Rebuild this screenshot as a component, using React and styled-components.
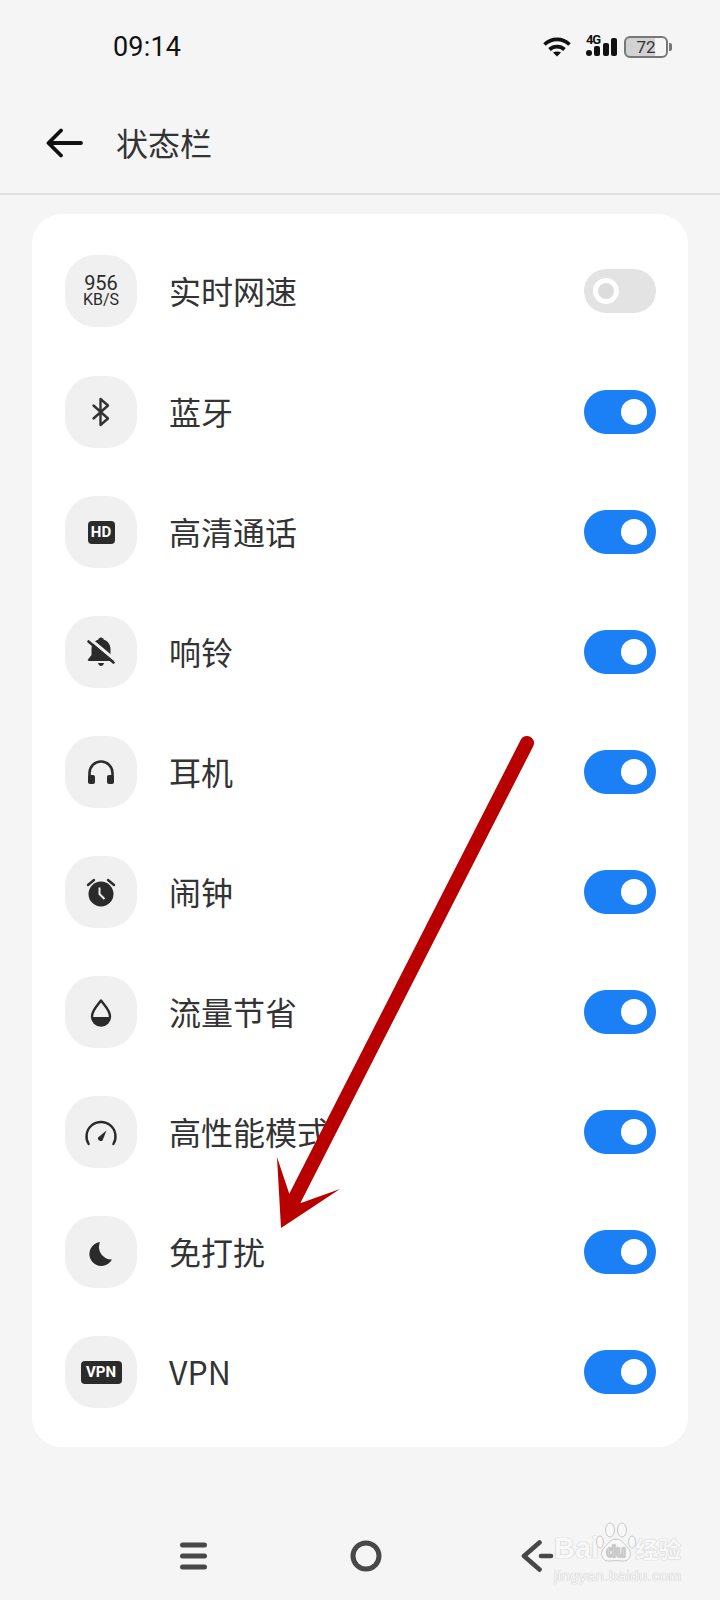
import React from "react";
import styled, { createGlobalStyle } from "styled-components";

const GlobalStyle = createGlobalStyle`
  html, body {
    margin: 0;
    padding: 0;
    background: #f5f5f5;
  }
  * {
    box-sizing: border-box;
  }
`;

const Page = styled.div`
  position: relative;
  width: 720px;
  height: 1600px;
  overflow: hidden;
  background: #f5f5f5;
  font-family: "Noto Sans CJK SC", Roboto, sans-serif;
  color: #333;
`;

const StatusBar = styled.div`
  height: 94px;
  display: flex;
  align-items: center;
  justify-content: space-between;
  padding: 0 48px 0 113px;
`;

const Time = styled.span`
  font-family: Roboto, sans-serif;
  font-size: 27px;
  letter-spacing: 0.2px;
  color: #111;
`;

const StatusIcons = styled.div`
  display: flex;
  align-items: center;
  margin-top: -1px;
`;

const WifiIcon = styled.svg`
  width: 28px;
  height: 20px;
`;

const SignalIcon = styled.svg`
  width: 32px;
  height: 22px;
  margin: -3px 0 0 15px;
  overflow: visible;
`;

const Battery = styled.div`
  display: flex;
  align-items: center;
  margin-left: 6px;
`;

const BatteryBody = styled.div`
  width: 44px;
  height: 22px;
  border: 2px solid #777;
  border-radius: 6px;
  display: flex;
  align-items: center;
  justify-content: center;
  font-family: Roboto, sans-serif;
  font-size: 17px;
  color: #333;
  background: linear-gradient(
    to right,
    #d2d2d2 ${(p) => p.$level}%,
    #f5f5f5 ${(p) => p.$level}%
  );
`;

const BatteryTip = styled.div`
  width: 3px;
  height: 8px;
  margin-left: 1px;
  background: #777;
  border-radius: 0 2px 2px 0;
`;

const Header = styled.header`
  height: 101px;
  display: flex;
  align-items: center;
  padding: 0 0 2px 46px;
  border-bottom: 2px solid #e0e0e0;
`;

const BackButton = styled.svg`
  width: 37px;
  height: 30px;
  margin-right: 33px;
`;

const Title = styled.h1`
  margin: -2px 0 0;
  font-size: 32px;
  font-weight: 400;
  color: #333;
`;

const Card = styled.section`
  margin: 19px 32px 0 32px;
  height: 1233px;
  padding: 41px 32px 37px 33px;
  background: #fff;
  border-radius: 30px;
  display: flex;
  flex-direction: column;
  gap: 48px;
`;

const Row = styled.div`
  height: 72px;
  display: flex;
  align-items: center;

  &:first-child {
    margin-bottom: 1px;
  }
`;

const IconBox = styled.div`
  width: 72px;
  height: 72px;
  flex: none;
  border-radius: 30px;
  background: #f0f0f0;
  display: flex;
  flex-direction: column;
  align-items: center;
  justify-content: center;
`;

const Icon = styled.svg`
  width: 40px;
  height: 40px;
`;

const Speed = styled.span`
  font-family: Roboto, sans-serif;
  font-size: ${(p) => p.$size}px;
  line-height: ${(p) => p.$line}px;
  color: #2b2b2b;
`;

const Tag = styled.span`
  width: ${(p) => p.$width}px;
  height: 23px;
  border-radius: 4px;
  background: #2b2b2b;
  color: #fff;
  font-family: Roboto, sans-serif;
  font-size: 15px;
  font-weight: 700;
  display: flex;
  align-items: center;
  justify-content: center;
`;

const Label = styled.span`
  flex: 1;
  margin: -3px 0 0 32px;
  font-size: 32px;
  line-height: 40px;
  color: #333;
`;

const Track = styled.div`
  width: 72px;
  height: 44px;
  border-radius: 22px;
  padding: 9px;
  display: flex;
  justify-content: ${(p) => (p.$on ? "flex-end" : "flex-start")};
  background: ${(p) => (p.$on ? "#1b7ff5" : "#e3e3e3")};
`;

const Knob = styled.div`
  width: 26px;
  height: 26px;
  border-radius: 50%;
  background: ${(p) => (p.$on ? "#fff" : "#dcdcdc")};
  border: ${(p) => (p.$on ? "none" : "5px solid #fff")};
`;

const NavBar = styled.nav`
  display: grid;
  grid-template-columns: repeat(3, 172px);
  padding: 93px 0 0 108px;
  justify-items: center;
`;

const NavIcon = styled.svg`
  width: 40px;
  height: 32px;
`;

const ArrowOverlay = styled.svg`
  position: absolute;
  left: 0;
  top: 0;
  width: 720px;
  height: 1600px;
  pointer-events: none;
`;

const Watermark = styled.div`
  position: absolute;
  left: 554px;
  top: 1522px;
  width: 130px;
  display: flex;
  flex-direction: column;
  color: #f8f8f8;
  text-shadow: 0 0 1px #c4c4c4, 0 0 1px #c4c4c4;
`;

const MarkLine = styled.div`
  display: flex;
  align-items: flex-end;
  height: 42px;
`;

const MarkLatin = styled.span`
  font-family: "Liberation Sans", sans-serif;
  font-weight: 700;
  font-size: 29px;
  line-height: 32px;
`;

const MarkPaw = styled.svg`
  width: 40px;
  height: 42px;
  margin: 0 -1px 0 -3px;
  flex: none;
`;

const MarkCjk = styled.span`
  font-size: 23px;
  line-height: 32px;
  font-weight: 700;
`;

const MarkUrl = styled.span`
  font-family: "Liberation Sans", sans-serif;
  font-size: 15px;
  line-height: 16px;
  letter-spacing: 0.4px;
  margin-top: 4px;
`;

const dark = "#2b2b2b";

const BluetoothIcon = () => (
  <Icon viewBox="0 0 40 40" fill="none" stroke="#333" strokeWidth="2.4" strokeLinejoin="round" strokeLinecap="round">
    <path d="M12.5 13.5L27 26.5L19.5 33V7L27 13.5L12.5 26.5" />
  </Icon>
);

const BellOffIcon = () => (
  <Icon viewBox="0 0 40 40">
    <path
      fill={dark}
      d="M20 5.5c1.5 0 2.6 1 2.8 2.2C27 9 29.5 12.5 29.5 17v6l3.5 4.5c.4.6 0 1.5-.8 1.5H7.8c-.8 0-1.2-.9-.8-1.5L10.500 23v-6c0-4.500 2.500-8 6.700-9.300C17.400 6.500 18.500 5.500 20 5.500z"
    />
    <path fill={dark} d="M17 31h6c-.4 1.800-1.600 3-3 3s-2.600-1.200-3-3z" />
    <path stroke="#f0f0f0" strokeWidth="3" d="M9 7l25 21" />
    <path stroke={dark} strokeWidth="2.600" strokeLinecap="round" d="M7.500 9.500l25 21" />
  </Icon>
);

const HeadphonesIcon = () => (
  <Icon viewBox="0 0 40 40">
    <path d="M8.500 29V21a11.500 11.500 0 0 1 23 0v8" fill="none" stroke={dark} strokeWidth="2.600" />
    <rect x="7" y="23" width="7" height="9" rx="2" fill={dark} />
    <rect x="26" y="23" width="7" height="9" rx="2" fill={dark} />
  </Icon>
);

const AlarmIcon = () => (
  <Icon viewBox="0 0 40 40">
    <circle cx="20" cy="22" r="12.500" fill={dark} />
    <path d="M18.500 15.500V22l5 5" fill="none" stroke="#f0f0f0" strokeWidth="2" />
    <path d="M7 13l6-5M33 13l-6-5" stroke={dark} strokeWidth="2.400" strokeLinecap="round" />
  </Icon>
);

const DropIcon = () => (
  <Icon viewBox="0 0 40 40">
    <path
      d="M20 8.500c3.500 5 9 9.500 9 16a9 9 0 0 1-18 0c0-6.500 5.500-11 9-16z"
      fill="none"
      stroke={dark}
      strokeWidth="2.400"
      strokeLinejoin="round"
    />
    <path d="M11 25h18a9 9 0 0 1-18 0z" fill={dark} />
  </Icon>
);

const GaugeIcon = () => (
  <Icon viewBox="0 0 40 40">
    <path d="M7.600 32a14.500 14.500 0 1 1 24.800 0" fill="none" stroke={dark} strokeWidth="2.400" strokeLinecap="round" />
    <path d="M17 25.500L25.500 18.500L21.500 28.500C20 30 16 28 17 25.500z" fill={dark} />
  </Icon>
);

const MoonIcon = () => (
  <Icon viewBox="0 0 40 40">
    <path d="M19 10a12 12 0 1 0 12 17.500A12.500 12.500 0 0 1 19 10z" fill={dark} />
  </Icon>
);

const rows = [
  {
    label: "实时网速",
    on: false,
    icon: (
      <>
        <Speed $size={20} $line={17}>956</Speed>
        <Speed $size={16} $line={15}>KB/S</Speed>
      </>
    ),
  },
  { label: "蓝牙", on: true, icon: <BluetoothIcon /> },
  { label: "高清通话", on: true, icon: <Tag $width={27}>HD</Tag> },
  { label: "响铃", on: true, icon: <BellOffIcon /> },
  { label: "耳机", on: true, icon: <HeadphonesIcon /> },
  { label: "闹钟", on: true, icon: <AlarmIcon /> },
  { label: "流量节省", on: true, icon: <DropIcon /> },
  { label: "高性能模式", on: true, icon: <GaugeIcon /> },
  { label: "免打扰", on: true, icon: <MoonIcon /> },
  { label: "VPN", on: true, icon: <Tag $width={41}>VPN</Tag> },
];

export default function App() {
  return (
    <Page>
      <GlobalStyle />
      <StatusBar>
        <Time>09:14</Time>
        <StatusIcons>
          <WifiIcon viewBox="0 0 28 20" fill="none" stroke="#111" strokeWidth="3.800">
            <path d="M1.500 7.500a18 18 0 0 1 25 0" />
            <path d="M6.500 12.500a11 11 0 0 1 15 0" />
            <path d="M10 15.500l4 4 4-4c-2.500-1.500-5.500-1.500-8 0z" fill="#111" stroke="none" />
          </WifiIcon>
          <SignalIcon viewBox="0 0 32 22" fill="#111">
            <text x="0" y="10" fontFamily="Roboto, sans-serif" fontWeight="700" fontSize="13" textLength="15">4G</text>
            <circle cx="3" cy="19" r="3" />
            <rect x="8" y="12" width="6" height="10" rx="2" />
            <rect x="17" y="9" width="6" height="13" rx="2" />
            <rect x="25" y="4" width="6" height="18" rx="2" />
          </SignalIcon>
          <Battery>
            <BatteryBody $level={72}>72</BatteryBody>
            <BatteryTip />
          </Battery>
        </StatusIcons>
      </StatusBar>

      <Header>
        <BackButton viewBox="0 0 37 30" fill="none" stroke="#111" strokeWidth="3.800" strokeLinecap="round" strokeLinejoin="round">
          <path d="M35 15H3M15 2.500L2.500 15L15 27.500" />
        </BackButton>
        <Title>状态栏</Title>
      </Header>

      <Card>
        {rows.map((row) => (
          <Row key={row.label}>
            <IconBox>{row.icon}</IconBox>
            <Label>{row.label}</Label>
            <Track $on={row.on}>
              <Knob $on={row.on} />
            </Track>
          </Row>
        ))}
      </Card>

      <NavBar>
        <NavIcon viewBox="0 0 40 32" fill="none" stroke="#484848" strokeWidth="5" strokeLinecap="round">
          <path d="M8.500 5h22M8.500 16h22M8.500 27h22" />
        </NavIcon>
        <NavIcon viewBox="0 0 40 32" fill="none" stroke="#484848" strokeWidth="5">
          <circle cx="20" cy="16" r="13" />
        </NavIcon>
        <NavIcon viewBox="0 0 40 32" fill="none" stroke="#484848" strokeWidth="4.600" strokeLinecap="round" strokeLinejoin="round">
          <path d="M21.500 2.500L6 16L21.500 29.500" />
          <path d="M23 16H33" />
        </NavIcon>
      </NavBar>

      <ArrowOverlay viewBox="0 0 720 1600">
        <line x1="527" y1="743" x2="294" y2="1200" stroke="#b90000" strokeWidth="14" strokeLinecap="round" />
        <polygon points="281,1228 277,1157 290,1196 301,1203 340,1189" fill="#b90000" />
      </ArrowOverlay>

      <Watermark>
        <MarkLine>
          <MarkLatin>Bai</MarkLatin>
          <MarkPaw viewBox="0 0 40 42" fill="#f8f8f8" stroke="#c8c8c8" strokeWidth="1">
            <ellipse cx="4" cy="20" rx="3.500" ry="6" />
            <ellipse cx="14" cy="8" rx="4.500" ry="7" />
            <ellipse cx="26" cy="8" rx="4.500" ry="7" />
            <ellipse cx="36" cy="20" rx="3.500" ry="6" />
            <path d="M20 17c6 0 8 5 12 9 5 5 2 14-6 13-4-.5-8-.5-12 0-8 1-11-8-6-13 4-4 6-9 12-9z" />
            <text x="20" y="35" fontFamily="Liberation Sans, sans-serif" fontWeight="700" fontSize="16" textAnchor="middle" fill="#f5f5f5">du</text>
          </MarkPaw>
          <MarkCjk>经验</MarkCjk>
        </MarkLine>
        <MarkUrl>jingyan.baidu.com</MarkUrl>
      </Watermark>
    </Page>
  );
}
